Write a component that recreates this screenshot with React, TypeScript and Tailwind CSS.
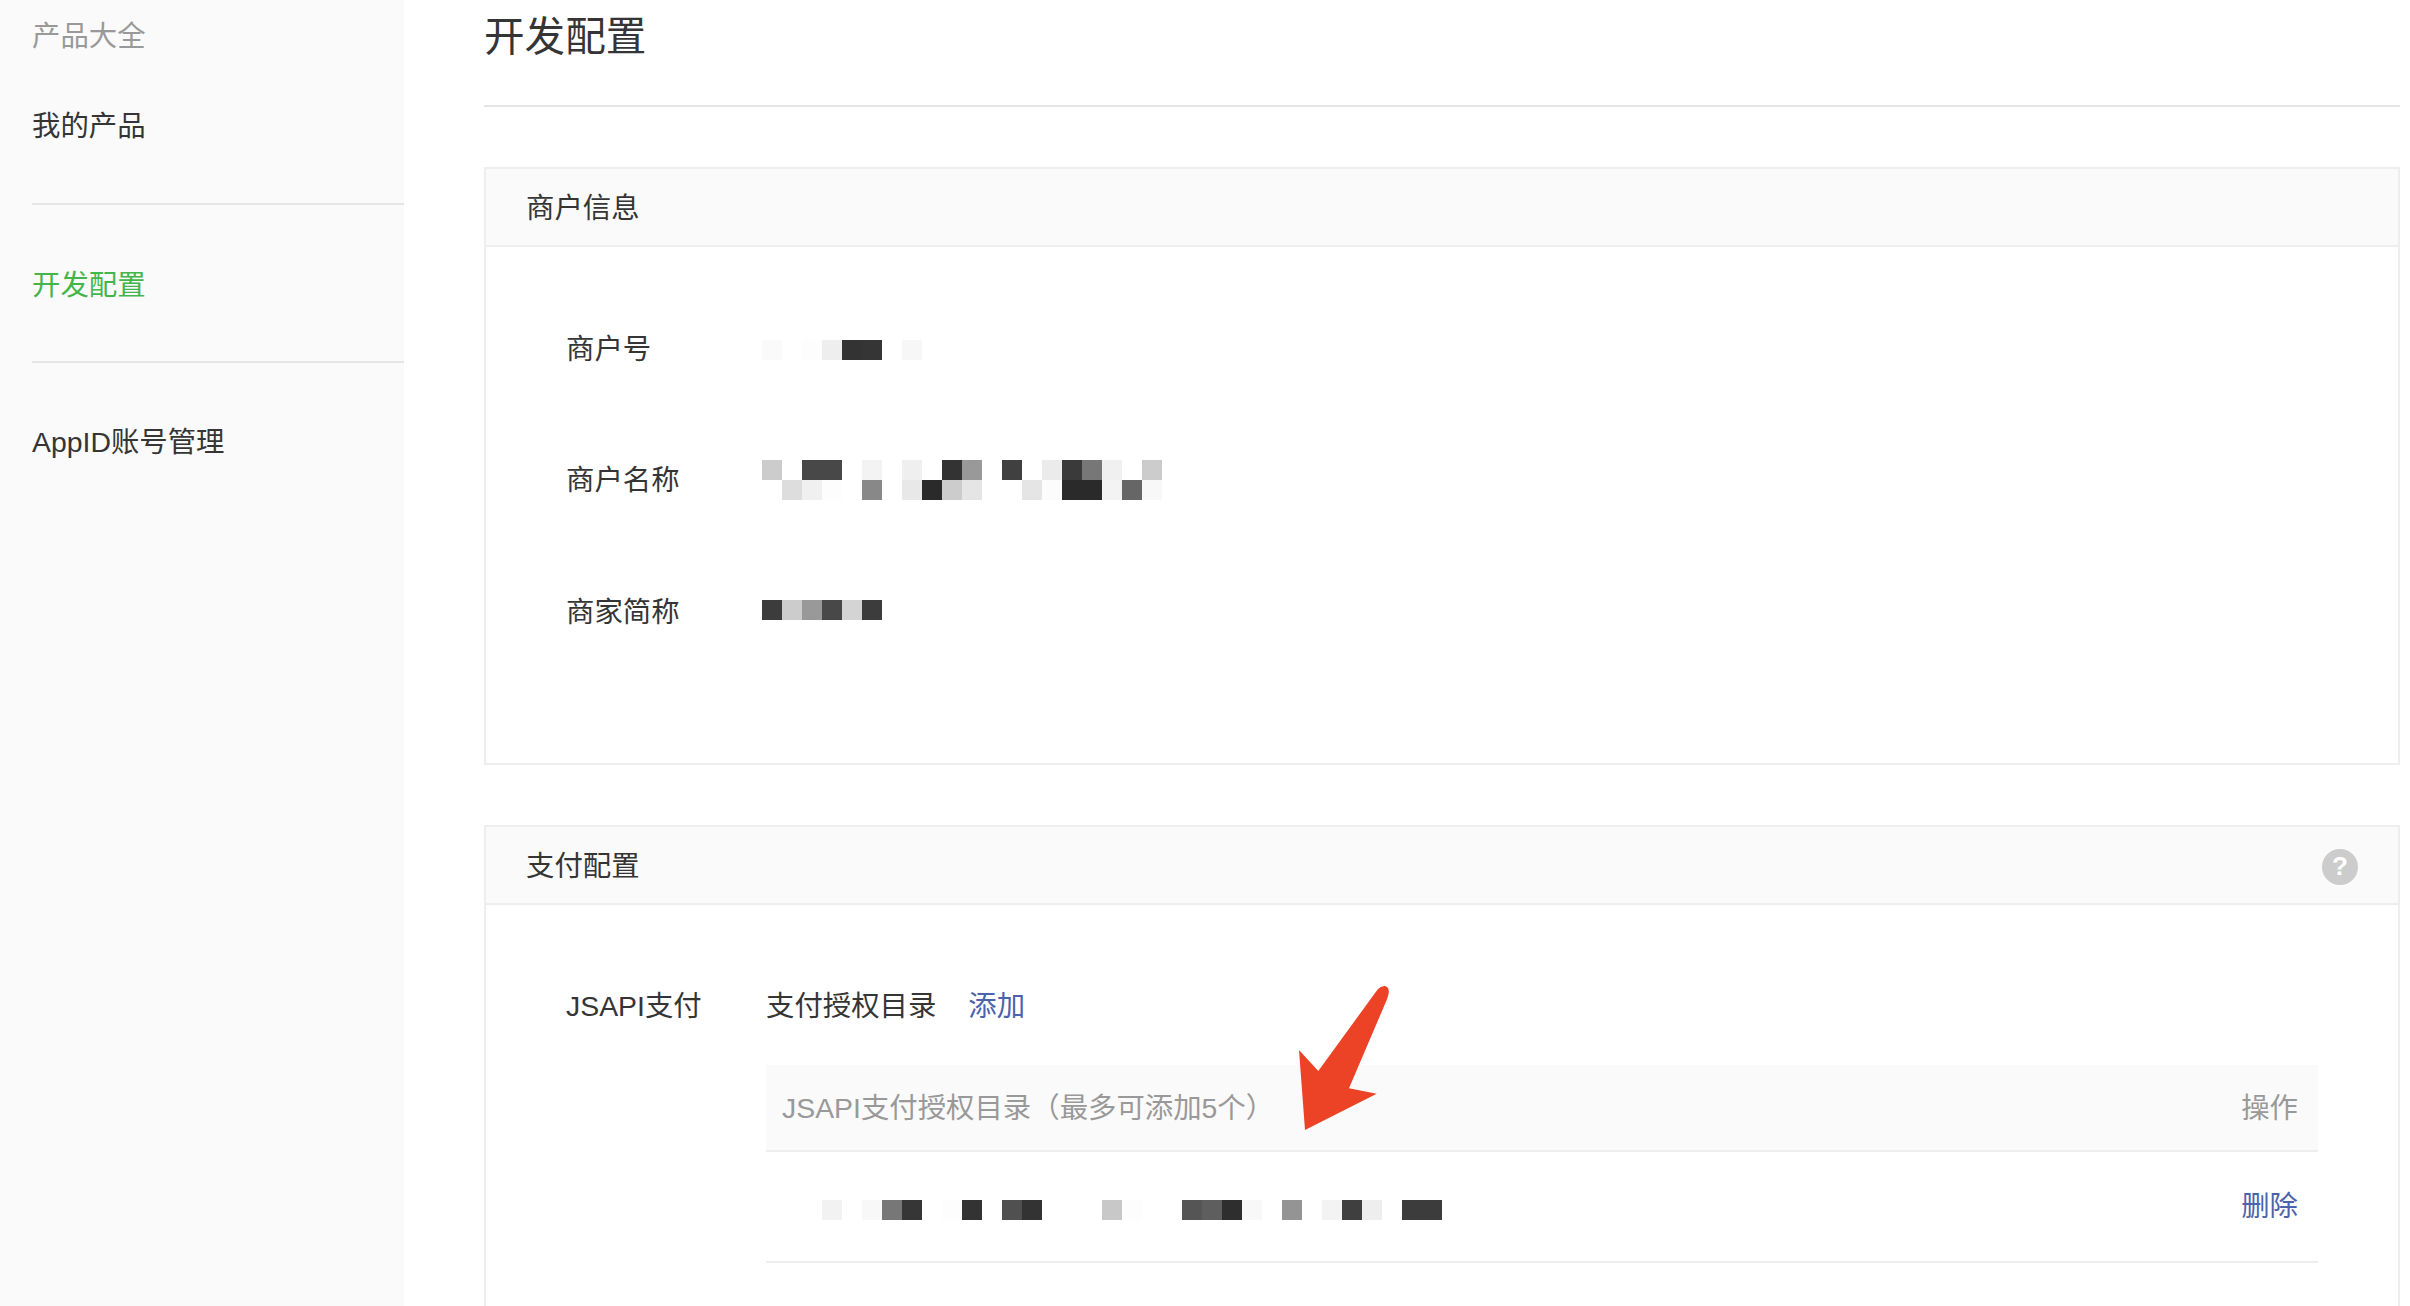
const SANS = "font-['Liberation_Sans','Noto_Sans_CJK_SC',sans-serif]";

type Cell = [number, string];

// blurred-out values: start x (relative), colour
const merchantId: Cell[] = [[0, '#fafafa'], [40, '#fdfdfd'], [60, '#eeeeee'], [80, '#333333'], [100, '#353535'], [140, '#f7f7f7']];
const nameTop: Cell[] = [[0, '#cccccc'], [40, '#484848'], [60, '#484848'], [100, '#f3f3f3'], [140, '#efefef'], [180, '#333333'], [200, '#999999'], [240, '#404040'], [280, '#ebebeb'], [300, '#3a3a3a'], [320, '#777777'], [340, '#f0f0f0'], [380, '#cccccc']];
const nameBottom: Cell[] = [[20, '#dddddd'], [40, '#f0f0f0'], [60, '#fdfdfd'], [100, '#888888'], [140, '#e8e8e8'], [160, '#2a2a2a'], [180, '#cccccc'], [200, '#e5e5e5'], [260, '#e5e5e5'], [280, '#fcfcfc'], [300, '#2a2a2a'], [320, '#2a2a2a'], [340, '#f3f3f3'], [360, '#666666'], [380, '#f8f8f8']];
const shortName: Cell[] = [[0, '#3c3c3c'], [20, '#cccccc'], [40, '#999999'], [60, '#484848'], [80, '#d4d4d4'], [100, '#3c3c3c']];
const directory: (string | null)[] = [
  '#f2f2f2', null, '#f8f8f8', '#777777', '#363636', null, '#fdfdfd', '#333333', null, '#505050', '#333333',
  null, null, null, '#c8c8c8', '#fdfdfd', null, null, '#555555', '#5e5e5e', '#2e2e2e', '#f8f8f8', null,
  '#949494', null, '#f3f3f3', '#3f3f3f', '#eeeeee', null, '#3c3c3c', '#3c3c3c',
];

function MosaicRow({ cells }: { cells: Cell[] }) {
  const byX = new Map(cells);
  const width = 400;
  return (
    <div className="flex h-[20px]">
      {Array.from({ length: width / 20 }, (_, i) => (
        <div key={i} className="w-[20px] h-[20px]" style={{ backgroundColor: byX.get(i * 20) ?? 'transparent' }} />
      ))}
    </div>
  );
}

function InfoRow({ label, children, className }: { label: string; children: React.ReactNode; className: string }) {
  return (
    <div className={`flex items-center h-[40px] ${className}`}>
      <div className="w-[196px] text-[28.4px] leading-[40px] text-[#353535]">{label}</div>
      {children}
    </div>
  );
}

function PanelHeader({ title, help }: { title: string; help?: boolean }) {
  return (
    <div className="flex items-center justify-between h-[78px] pt-[3px] pl-[40px] pr-[40px] bg-[#fafafa] border-b-2 border-[#eeeeee]">
      <span className="text-[28.4px] text-[#353535]">{title}</span>
      {help && (
        <span className="flex items-center justify-center w-[36px] h-[36px] rounded-full bg-[#cccccc] text-white text-[26px] font-bold">
          ?
        </span>
      )}
    </div>
  );
}

export default function App() {
  return (
    <div className={`relative flex h-[1306px] w-[2410px] overflow-hidden bg-white ${SANS}`}>
      {/* Sidebar */}
      <aside className="w-[404px] shrink-0 h-full pl-[32px] bg-[#fafafa] text-[28.4px]">
        <div className="h-[70px] leading-[73px] text-[#999999]">产品大全</div>
        <div className="h-[135px] pt-[38px] leading-[36px] text-[#353535] border-b-2 border-[#e5e5e5]">我的产品</div>
        <div className="h-[158px] flex items-center pt-[4px] text-[#44b549] border-b-2 border-[#e5e5e5]">开发配置</div>
        <div className="h-[158px] flex items-center text-[#353535]">AppID账号管理</div>
      </aside>

      {/* Main */}
      <main className="w-[1916px] ml-[80px] shrink-0">
        <div className="h-[107px] pt-[8px] border-b-2 border-[#e5e5e5]">
          <h1 className="text-[40.6px] leading-[58px] font-normal text-[#353535]">开发配置</h1>
        </div>

        {/* Merchant info */}
        <section className="mt-[60px] h-[598px] border-2 border-[#eeeeee]">
          <PanelHeader title="商户信息" />
          <div className="pl-[80px] text-[#353535]">
            <InfoRow label="商户号" className="mt-[82px]">
              <div className="mt-[2px]">
                <MosaicRow cells={merchantId} />
              </div>
            </InfoRow>
            <InfoRow label="商户名称" className="mt-[91px]">
              <div>
                <MosaicRow cells={nameTop} />
                <MosaicRow cells={nameBottom} />
              </div>
            </InfoRow>
            <InfoRow label="商家简称" className="mt-[92px]">
              <div className="-mt-[4px]">
                <MosaicRow cells={shortName} />
              </div>
            </InfoRow>
          </div>
        </section>

        {/* Payment config */}
        <section className="mt-[60px] h-[700px] border-2 border-[#eeeeee]">
          <PanelHeader title="支付配置" help />
          <div className="flex pl-[80px] pt-[81px] pr-[80px]">
            <div className="w-[200px] shrink-0 text-[28.4px] leading-[40px] text-[#353535]">JSAPI支付</div>
            <div className="flex-1">
              <div className="flex text-[28.4px] leading-[40px]">
                <span className="text-[#353535]">支付授权目录</span>
                <span className="ml-[32px] text-[#4a63ab]">添加</span>
              </div>
              <div className="flex items-center justify-between mt-[39px] h-[87px] pt-[2px] pl-[16px] pr-[20px] bg-[#fafafa] border-b-2 border-[#eeeeee] text-[28.4px] text-[#999999]">
                <span>JSAPI支付授权目录（最多可添加5个）</span>
                <span>操作</span>
              </div>
              <div className="flex items-center justify-between h-[111px] pl-[56px] pr-[20px] border-b-2 border-[#eeeeee]">
                <div className="flex mt-[7px]">
                  {directory.map((color, i) => (
                    <div key={i} className="w-[20px] h-[20px]" style={{ backgroundColor: color ?? 'transparent' }} />
                  ))}
                </div>
                <span className="text-[28.4px] text-[#4a63ab]">删除</span>
              </div>
            </div>
          </div>
        </section>
      </main>

      {/* Red annotation arrow */}
      <svg className="absolute left-[1260px] top-[960px] w-[160px] h-[190px]" viewBox="0 0 160 190">
        <path
          d="M39 90 L58.3 111 L116.5 31 C120 26.5 123 26 125 26 C128 26.5 129.5 30 128.5 34 C128 37 127 39 126.7 40 L89 128.3 L116.7 133.7 L45 170 Z"
          fill="#ec4226"
        />
      </svg>
    </div>
  );
}
